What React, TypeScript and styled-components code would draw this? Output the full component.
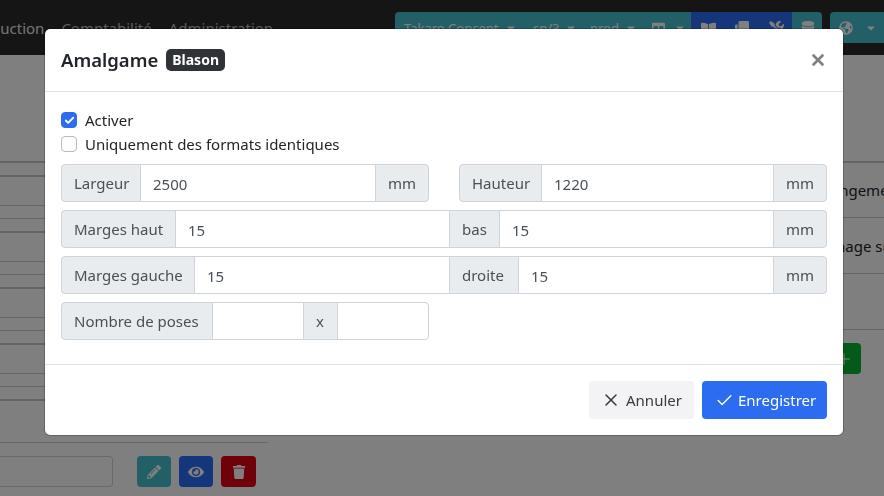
import React from 'react';
import styled, { createGlobalStyle } from 'styled-components';
import { Check, Plus, X } from 'lucide-react';
import {
    FaBookOpen, FaClone, FaColumns, FaCaretDown, FaDatabase, FaEye, FaGlobeAmericas,
    FaPencilAlt, FaTools, FaTrash,
} from 'react-icons/fa';

const GlobalStyle = createGlobalStyle`
    html, body {
        margin: 0;
        height: 100%;
        overflow: hidden;
        background: #fff;
        color: #212529;
        font-family: "Noto Sans", "Open Sans", sans-serif;
        font-size: 15px;
        line-height: 24px;
    }
    * { box-sizing: border-box; }
`;

const Page = styled.div`
    width: 884px;
    height: 496px;
    overflow: hidden;
`;

const Navbar = styled.nav`
    display: flex;
    align-items: flex-start;
    height: 55px;
    padding-top: 12px;
    background: #2a2a2a;
    overflow: hidden;
`;

const NavLinks = styled.div`
    display: flex;
    gap: 17px;
    margin-left: -33px;
    padding-top: 4px;
    width: 428px;
    flex: none;
`;

const NavLink = styled.span<{ active?: boolean }>`
    color: ${props => (props.active ? '#e8e8e8' : '#bdbdbd')};
    white-space: nowrap;
`;

const NavGroup = styled.div`
    display: flex;
    height: 31px;
    flex: none;
    border-radius: 4px;
    overflow: hidden;
    background: #46bfce;
    color: #fff;
    font-size: 13px;
`;

const NavItem = styled.span<{ width: number; gap?: number; blue?: boolean }>`
    display: flex;
    align-items: center;
    gap: ${props => props.gap ?? 5}px;
    width: ${props => props.width}px;
    padding: 1px 0 0 ${props => (props.blue ? 10 : 9)}px;
    background: ${props => (props.blue ? '#2a6cf4' : 'transparent')};
    white-space: nowrap;
    svg { flex: none; }
`;

const GlobeGroup = styled(NavGroup)`
    margin-left: 8px;
    width: 70px;
`;

const Content = styled.main`
    display: flex;
    justify-content: space-between;
    height: 441px;
`;

const LeftColumn = styled.section`
    width: 268px;
    padding-top: 106px;
`;

const TableLine = styled.div<{ height: number; strong?: boolean }>`
    height: ${props => props.height}px;
    border-top: ${props => (props.strong ? '2px' : '1px')} solid ${props => (props.strong ? '#c8c8c8' : '#d0d0d0')};
`;

const Controls = styled.div`
    display: flex;
    align-items: center;
    gap: 8px;
    margin-top: 13px;
    border-top: 1px solid #d0d0d0;
    padding-top: 13px;
`;

const SearchBox = styled.div`
    width: 113px;
    height: 31px;
    margin-right: 16px;
    border: 1px solid #ced4da;
    border-left: none;
    border-radius: 0 4px 4px 0;
`;

const ActionButton = styled.span<{ color: string; width?: number }>`
    display: flex;
    align-items: center;
    justify-content: center;
    width: ${props => props.width ?? 34}px;
    height: 31px;
    border-radius: 4px;
    background: ${props => props.color};
    color: #fff;
    font-size: 14px;
`;

const RightColumn = styled.section`
    width: 184px;
    padding-top: 106px;
    overflow: hidden;
`;

const RightRow = styled.div<{ indent: number; strong?: boolean }>`
    display: flex;
    align-items: center;
    height: 56px;
    padding-left: ${props => props.indent}px;
    border-top: ${props => (props.strong ? '2px solid #c8c8c8' : '1px solid #d0d0d0')};
    white-space: nowrap;
`;

const RightActions = styled.div`
    display: flex;
    justify-content: flex-end;
    padding: 13px 23px 0 0;
    border-top: 1px solid #d0d0d0;
`;

const Backdrop = styled.div`
    position: fixed;
    inset: 0;
    background: rgba(0, 0, 0, .5);
`;

const Modal = styled.div`
    width: 800px;
    margin: 28px 0 0 44px;
    background: #fff;
    border: 1px solid rgba(0, 0, 0, .2);
    background-clip: padding-box;
    border-radius: 6px;
`;

const ModalHeader = styled.header`
    display: flex;
    align-items: center;
    justify-content: space-between;
    padding: 16px;
    border-bottom: 1px solid #dee2e6;
`;

const ModalTitle = styled.h5`
    display: flex;
    align-items: center;
    gap: 8px;
    margin: 0;
    font-size: 18.5px;
    line-height: 30px;
    font-weight: 600;
`;

const Badge = styled.span`
    padding: 0 6px;
    height: 22px;
    border-radius: 5px;
    background: #2f3236;
    color: #fff;
    font-size: 14px;
    line-height: 22px;
    font-weight: 700;
`;

const CloseButton = styled.span`
    display: flex;
    color: #808080;
`;

const ModalBody = styled.div`
    padding: 16px 16px 24px;
`;

const CheckRow = styled.label`
    display: flex;
    align-items: center;
    gap: 8px;
    height: 24px;
    color: #212529;
`;

const CheckBox = styled.span<{ checked?: boolean }>`
    display: flex;
    align-items: center;
    justify-content: center;
    width: 16px;
    height: 16px;
    border-radius: 4px;
    border: 1px solid ${props => (props.checked ? '#2b6cf0' : '#b4bac4')};
    background: ${props => (props.checked ? '#2b6cf0' : '#fff')};
    color: #fff;
`;

const Fields = styled.div`
    display: flex;
    flex-direction: column;
    gap: 8px;
    margin-top: 8px;
`;

const TwoColumns = styled.div`
    display: grid;
    grid-template-columns: 368px 368px;
    gap: 30px;
`;

const InputGroup = styled.div`
    display: flex;
    height: 38px;
    & > *:first-child { border-radius: 4px 0 0 4px; }
    & > *:last-child { border-radius: 0 4px 4px 0; }
    & > * + * { margin-left: -1px; }
`;

const Addon = styled.span<{ width: number }>`
    display: flex;
    align-items: center;
    flex: none;
    width: ${props => props.width}px;
    padding-left: 12px;
    background: #e9ecef;
    border: 1px solid #ced4da;
    color: #495057;
    white-space: nowrap;
`;

const Input = styled.span`
    display: flex;
    align-items: center;
    flex: 1 1 0;
    min-width: 0;
    padding: 1px 0 0 12px;
    background: #fff;
    border: 1px solid #ced4da;
    color: #495057;
`;

const ModalFooter = styled.footer`
    display: flex;
    justify-content: flex-end;
    gap: 8px;
    padding: 16px;
    border-top: 1px solid #dee2e6;
`;

const FooterButton = styled.span<{ primary?: boolean; width: number }>`
    display: flex;
    align-items: center;
    gap: ${props => (props.primary ? 4 : 5)}px;
    width: ${props => props.width}px;
    height: 38px;
    padding-left: ${props => (props.primary ? 13 : 12)}px;
    border-radius: 4px;
    background: ${props => (props.primary ? '#2b6cf0' : '#f3f3f6')};
    color: ${props => (props.primary ? '#fff' : '#343a40')};
`;

const tableRows = [14, 30, 13, 13, 30, 13, 13, 30, 13, 13, 30, 13, 13, 30];

const FieldGroup = ({ label, labelWidth, value }: { label: string; labelWidth: number; value: string }) => (
    <InputGroup>
        <Addon width={labelWidth}>{label}</Addon>
        <Input>{value}</Input>
        <Addon width={54}>mm</Addon>
    </InputGroup>
);

const App = () => (
    <Page>
        <GlobalStyle />
        <Navbar>
            <NavLinks>
                <NavLink active>Production</NavLink>
                <NavLink>Comptabilité</NavLink>
                <NavLink>Administration</NavLink>
            </NavLinks>
            <NavGroup>
                <NavItem width={129} gap={7}>Takaro Concept <FaCaretDown size={12} /></NavItem>
                <NavItem width={57}>sn/3 <FaCaretDown size={12} /></NavItem>
                <NavItem width={62} gap={6}>prod <FaCaretDown size={12} /></NavItem>
                <NavItem width={48} gap={9}><FaColumns size={13} /><FaCaretDown size={12} /></NavItem>
                <NavItem width={34} blue><FaBookOpen size={15} /></NavItem>
                <NavItem width={34} blue><FaClone size={14} /></NavItem>
                <NavItem width={33} blue><FaTools size={15} /></NavItem>
                <NavItem width={30}><FaDatabase size={14} /></NavItem>
            </NavGroup>
            <GlobeGroup>
                <NavItem width={70} gap={12}><FaGlobeAmericas size={14} /><FaCaretDown size={12} /></NavItem>
            </GlobeGroup>
        </Navbar>
        <Content>
            <LeftColumn>
                {tableRows.map((height, i) => (
                    <TableLine key={i} height={height} strong={i === 0 || i % 3 === 1} />
                ))}
                <Controls>
                    <SearchBox />
                    <ActionButton color="#46bfce"><FaPencilAlt /></ActionButton>
                    <ActionButton color="#2a6cf4"><FaEye size={16} /></ActionButton>
                    <ActionButton color="#e00014" width={35}><FaTrash /></ActionButton>
                </Controls>
            </LeftColumn>
            <RightColumn>
                <RightRow indent={112} strong>Changement de format</RightRow>
                <RightRow indent={105}>Affichage sur plan</RightRow>
                <RightRow indent={0} />
                <RightActions>
                    <ActionButton color="#0ab432"><Plus size={18} strokeWidth={1.5} /></ActionButton>
                </RightActions>
            </RightColumn>
        </Content>
        <Backdrop>
            <Modal>
                <ModalHeader>
                    <ModalTitle>Amalgame <Badge>Blason</Badge></ModalTitle>
                    <CloseButton><X size={18} strokeWidth={3.5} /></CloseButton>
                </ModalHeader>
                <ModalBody>
                    <CheckRow>
                        <CheckBox checked><Check size={11} strokeWidth={4} /></CheckBox>
                        Activer
                    </CheckRow>
                    <CheckRow>
                        <CheckBox />
                        Uniquement des formats identiques
                    </CheckRow>
                    <Fields>
                        <TwoColumns>
                            <FieldGroup label="Largeur" labelWidth={80} value="2500" />
                            <FieldGroup label="Hauteur" labelWidth={83} value="1220" />
                        </TwoColumns>
                        <InputGroup>
                            <Addon width={115}>Marges haut</Addon>
                            <Input>15</Input>
                            <Addon width={51}>bas</Addon>
                            <Input>15</Input>
                            <Addon width={54}>mm</Addon>
                        </InputGroup>
                        <InputGroup>
                            <Addon width={134}>Marges gauche</Addon>
                            <Input>15</Input>
                            <Addon width={70}>droite</Addon>
                            <Input>15</Input>
                            <Addon width={54}>mm</Addon>
                        </InputGroup>
                        <TwoColumns>
                            <InputGroup>
                                <Addon width={152}>Nombre de poses</Addon>
                                <Input />
                                <Addon width={35}>x</Addon>
                                <Input />
                            </InputGroup>
                        </TwoColumns>
                    </Fields>
                </ModalBody>
                <ModalFooter>
                    <FooterButton width={105}><X size={20} strokeWidth={1.8} /> Annuler</FooterButton>
                    <FooterButton primary width={125}><Check size={19} strokeWidth={1.8} /> Enregistrer</FooterButton>
                </ModalFooter>
            </Modal>
        </Backdrop>
    </Page>
);

export default App;
